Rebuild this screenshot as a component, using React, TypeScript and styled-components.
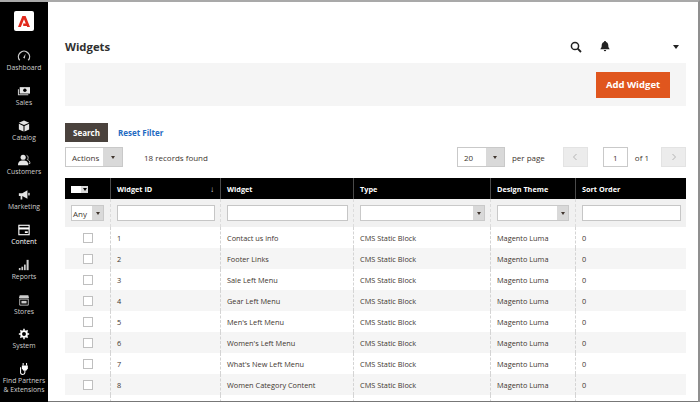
import React from "react";
import styled, { createGlobalStyle } from "styled-components";

const Global = createGlobalStyle`
  html, body { margin: 0; padding: 0; height: 402px; overflow: hidden; background: #fff; }
  body { font-family: "Open Sans", "Liberation Sans", sans-serif; color: #41362f; }
  * { box-sizing: border-box; }
`;

const Page = styled.div`
  position: relative;
  display: flex;
  width: 700px;
  height: 402px;
  overflow: hidden;
  background: #fff;
  &::after {
    content: "";
    position: absolute;
    inset: 0;
    pointer-events: none;
    border-top: 2px solid #a9a9a9;
    border-right: 2px solid #8f8f8f;
  }
`;

const Bottom = styled.div`
  position: absolute;
  left: 48px;
  right: 0;
  bottom: 0;
  height: 1px;
  background: #777;
`;

const Side = styled.nav`
  width: 48px;
  flex: none;
  background: #000;
  display: flex;
  flex-direction: column;
  align-items: center;
  padding-top: 11px;
`;

const Logo = styled.div`
  width: 20px;
  height: 20px;
  border-radius: 2px;
  background: #fff;
  display: flex;
  align-items: center;
  justify-content: center;
  margin-bottom: 18px;
`;

const NavItem = styled.div<{ $active?: boolean }>`
  height: 34.8px;
  width: 48px;
  flex: none;
  display: flex;
  flex-direction: column;
  align-items: center;
  justify-content: flex-start;
  color: ${(p) => (p.$active ? "#fff" : "#cfcfcf")};
  font-size: 6.8px;
  line-height: 9px;
  text-align: center;
  white-space: nowrap;
  svg { display: block; margin: 1px 0 1px; }
`;

const Main = styled.main`
  flex: 1;
  min-width: 0;
  padding: 0 14px 0 17px;
`;

const TopBar = styled.header`
  height: 63px;
  display: flex;
  align-items: center;
  padding-top: 30px;
`;

const Title = styled.h1`
  margin: 0;
  flex: 1;
  font-size: 11.3px;
  font-weight: 700;
  color: #303030;
`;

const TopIcons = styled.div`
  display: flex;
  align-items: center;
  margin-right: 7px;
`;

const IconSlot = styled.span<{ $w: number }>`
  width: ${(p) => p.$w}px;
  display: flex;
  align-items: center;
`;

const ActionBar = styled.div`
  height: 43px;
  background: #f5f5f5;
  display: flex;
  align-items: center;
  justify-content: flex-end;
  padding: 0 16px 0 0;
`;

const Primary = styled.button`
  width: 74px;
  height: 26px;
  border: 0;
  padding: 0;
  background: #e0561e;
  color: #fff;
  font: 700 9.5px "Open Sans", sans-serif;
`;

const FilterRow = styled.div`
  display: flex;
  align-items: center;
  gap: 10px;
  margin-top: 17px;
  height: 19px;
`;

const SearchBtn = styled.button`
  width: 43px;
  height: 19px;
  border: 0;
  padding: 0;
  background: #4a423d;
  color: #fff;
  font: 700 8px "Open Sans", sans-serif;
`;

const LinkText = styled.a`
  color: #1f6bc2;
  font-size: 8px;
  font-weight: 700;
`;

const Toolbar = styled.div`
  display: flex;
  align-items: center;
  height: 20px;
  margin-top: 5px;
  margin-bottom: 11px;
  font-size: 8px;
  color: #41362f;
`;

const Select = styled.div<{ $w: number; $h?: number }>`
  width: ${(p) => p.$w}px;
  height: ${(p) => p.$h ?? 20}px;
  flex: none;
  display: flex;
  border: 1px solid #c9c9c9;
  background: #fff;
  font-size: 8px;
  color: #41362f;
`;

const SelectText = styled.span<{ $pad?: number }>`
  flex: 1;
  padding-left: ${(p) => p.$pad ?? 6}px;
  display: flex;
  align-items: center;
`;

const Arrow = styled.span<{ $w?: number }>`
  width: ${(p) => p.$w ?? 18}px;
  flex: none;
  background: #d9d9d9;
  display: flex;
  align-items: center;
  justify-content: center;
  &::before {
    content: "";
    border-style: solid;
    border-width: 3px 2.5px 0;
    border-color: #41362f transparent transparent;
  }
`;

const Found = styled.span`
  margin-left: 21px;
  flex: 1;
`;

const PerPage = styled.span`
  margin: 0 18px 0 7px;
`;

const Pager = styled.button`
  width: 25px;
  height: 20px;
  padding: 0;
  flex: none;
  border: 1px solid #e3e3e3;
  background: #ececec;
  color: #adadad;
  display: flex;
  align-items: center;
  justify-content: center;
`;

const PageInput = styled.div`
  width: 25px;
  height: 20px;
  margin-left: 15px;
  border: 1px solid #c9c9c9;
  display: flex;
  align-items: center;
  justify-content: center;
`;

const OfText = styled.span`
  margin: 0 12px 0 7px;
`;

const Table = styled.table`
  border-collapse: separate;
  border-spacing: 0;
  table-layout: fixed;
  width: 621px;
  font-size: 7.35px;
  color: #41362f;
`;

const Th = styled.th<{ $w: number }>`
  width: ${(p) => p.$w}px;
  height: 21px;
  background: #000;
  color: #fff;
  font-size: 7.3px;
  font-weight: 700;
  text-align: left;
  padding: 0 6px;
  border-left: 1px solid #4a4a4a;
  position: relative;
  &:first-child { border-left: 0; }
`;

const HeaderBox = styled.span`
  display: inline-flex;
  width: 17px;
  height: 7px;
  background: #fff;
  justify-content: flex-end;
  vertical-align: middle;
`;

const HeaderArrow = styled.span`
  width: 7px;
  background: #d9d9d9;
  display: flex;
  align-items: center;
  justify-content: center;
  &::before {
    content: "";
    border-style: solid;
    border-width: 3px 2px 0;
    border-color: #000 transparent transparent;
  }
`;

const SortMark = styled.span`
  position: absolute;
  right: 6px;
  top: 5px;
  font-size: 8px;
  font-weight: 400;
  color: #ddd;
`;

const FilterCell = styled.td`
  height: 28px;
  background: #f1f1f1;
  padding: 0 5px 0 6px;
  border-left: 1px dashed #dcdcdc;
  &:first-child { border-left: 0; }
`;

const TextInput = styled.div`
  width: 100%;
  height: 16px;
  background: #fff;
  border: 1px solid #c6c6c6;
`;

const Row = styled.tr<{ $alt: boolean }>`
  background: ${(p) => (p.$alt ? "#f5f5f5" : "#fff")};
`;

const Td = styled.td`
  height: 21px;
  padding: 0 6px;
  border-left: 1px dashed #d4d4d4;
  white-space: nowrap;
  overflow: hidden;
  &:first-child { border-left: 0; }
`;

const Check = styled.div`
  width: 10px;
  height: 10px;
  border: 1px solid #bfbfbf;
  background: #fff;
  margin: 0 auto;
`;

const Ic = ({ children }: { children: React.ReactNode }) => (
  <svg width={14} height={12} viewBox="0 0 16 14" fill="#fff">{children}</svg>
);

const icons: Record<string, React.ReactNode> = {
  Dashboard: (
    <Ic>
      <path d="M3 12a6.500 6.500 0 1 1 10 0" fill="none" stroke="#ccc" strokeWidth="1.600" />
      <path d="M7 9 9.800 4.500 9 10z" fill="#ccc" />
    </Ic>
  ),
  Sales: (
    <Ic>
      <rect x="3" y="2.500" width="12" height="7.500" fill="#e4e4e4" />
      <circle cx="9" cy="6.200" r="2" fill="#000" />
      <path d="M1.500 5v6.500h11.500" fill="none" stroke="#ccc" strokeWidth="1.200" />
    </Ic>
  ),
  Catalog: (
    <Ic>
      <path d="M8 .5 14 3.100 8 5.700 2 3.100z M2 4.500 7.400 6.900V13.500L2 11z M14 4.500 8.600 6.900V13.500L14 11z" fill="#e4e4e4" />
    </Ic>
  ),
  Customers: (
    <Ic>
      <circle cx="7" cy="3.800" r="3" fill="#e4e4e4" />
      <path d="M1 13c0-4 2-5.500 6-5.500s6 1.500 6 5.500z" fill="#e4e4e4" />
      <path d="M11 1.500c2 .3 2.600 3.600.8 5 2 .6 3.200 2.200 3.200 4.500h-1.500" fill="none" stroke="#ccc" strokeWidth="1" />
    </Ic>
  ),
  Marketing: (
    <Ic>
      <path d="M2 5h4l6-3.500v10L6 8.200v4H4V8.200H2z" fill="#e4e4e4" />
      <rect x="13" y="4.500" width="1.600" height="3" fill="#e4e4e4" />
    </Ic>
  ),
  Content: (
    <Ic>
      <rect x="2" y="1.500" width="12" height="11" fill="none" stroke="#fff" strokeWidth="1.300" />
      <rect x="2" y="4" width="12" height="2.400" fill="#fff" />
      <rect x="9" y="8.500" width="3.400" height="2" fill="#fff" />
    </Ic>
  ),
  Reports: (
    <Ic>
      <rect x="2" y="10.500" width="2" height="2.500" fill="#ccc" />
      <rect x="5" y="9" width="2" height="4" fill="#ccc" />
      <rect x="8" y="6.500" width="2" height="6.500" fill="#ccc" />
      <rect x="11" y="1" width="2.400" height="12" fill="#ccc" />
    </Ic>
  ),
  Stores: (
    <Ic>
      <path d="M3 1.500h10l1 3.500H2z" fill="#ccc" />
      <path d="M3 6h10v7H3z" fill="none" stroke="#ccc" strokeWidth="1" />
      <rect x="5" y="8" width="6" height="3" fill="#ccc" />
    </Ic>
  ),
  System: (
    <Ic>
      <circle cx="8" cy="7" r="3.400" fill="none" stroke="#fff" strokeWidth="2.200" />
      <path d="M8 1v2.200M8 10.800V13M2 7h2.200M11.800 7H14M3.800 2.800l1.500 1.500M10.700 9.700l1.500 1.500M12.200 2.800l-1.500 1.500M5.300 9.700l-1.500 1.500" stroke="#fff" strokeWidth="1.800" />
    </Ic>
  ),
  "Find Partners": (
    <Ic>
      <path d="M7 0v3M11 0v3" stroke="#fff" strokeWidth="1.200" />
      <path d="M5.500 3h7v3.500L10.500 9h-3L5.500 6.500z" fill="#fff" />
      <path d="M9 9v2.500c0 2.500-5 2.500-5 0V5" fill="none" stroke="#fff" strokeWidth="1.200" />
    </Ic>
  ),
};

const nav = ["Dashboard", "Sales", "Catalog", "Customers", "Marketing", "Content", "Reports", "Stores", "System"];

const rows = [
  "Contact us info",
  "Footer Links",
  "Sale Left Menu",
  "Gear Left Menu",
  "Men's Left Menu",
  "Women's Left Menu",
  "What's New Left Menu",
  "Women Category Content",
];

const cols: [string, number][] = [
  ["", 45],
  ["Widget ID", 110],
  ["Widget", 133],
  ["Type", 137],
  ["Design Theme", 85],
  ["Sort Order", 111],
];

export default function App() {
  return (
    <Page>
      <Global />
      <Side>
        <Logo>
          <svg width="12" height="11" viewBox="0 0 12 11">
            <path d="M4.400 0H7.600L12 11H9.200L6 3.200 2.800 11H0z M5.200 7.500h3l1 2.400H5.200z" fill="#e1291c" />
          </svg>
        </Logo>
        {nav.map((n) => (
          <NavItem key={n} $active={n === "Content"}>
            {icons[n]}
            {n}
          </NavItem>
        ))}
        <NavItem>
          {icons["Find Partners"]}
          Find Partners
          <br />
          &amp; Extensions
        </NavItem>
      </Side>
      <Main>
        <TopBar>
          <Title>Widgets</Title>
          <TopIcons>
            <IconSlot $w={30}>
              <svg width="12" height="12" viewBox="0 0 12 12">
                <circle cx="5" cy="5" r="3.600" fill="none" stroke="#222" strokeWidth="1.500" />
                <path d="M7.700 7.700 11 11" stroke="#222" strokeWidth="1.800" />
              </svg>
            </IconSlot>
            <IconSlot $w={73}>
              <svg width="10" height="11" viewBox="0 0 10 11">
                <path d="M5 0c.7 0 1 .4 1 1 1.800.5 2.300 2 2.300 3.600 0 1.800.5 2.600 1.400 3.600H.3C1.200 7.200 1.700 6.400 1.700 4.600 1.700 3 2.200 1.500 4 1c0-.6.300-1 1-1z" fill="#222" />
                <path d="M3.800 9h2.400a1.200 1.200 0 0 1-2.400 0z" fill="#222" />
              </svg>
            </IconSlot>
            <svg width="6" height="4" viewBox="0 0 6 4">
              <path d="M0 0h6L3 4z" fill="#222" />
            </svg>
          </TopIcons>
        </TopBar>
        <ActionBar>
          <Primary>Add Widget</Primary>
        </ActionBar>
        <FilterRow>
          <SearchBtn>Search</SearchBtn>
          <LinkText>Reset Filter</LinkText>
        </FilterRow>
        <Toolbar>
          <Select $w={58}>
            <SelectText>Actions</SelectText>
            <Arrow $w={19} />
          </Select>
          <Found>18 records found</Found>
          <Select $w={48}>
            <SelectText>20</SelectText>
            <Arrow />
          </Select>
          <PerPage>per page</PerPage>
          <Pager>
            <svg width="6" height="8" viewBox="0 0 6 8"><path d="M4.500 1 1.500 4l3 3" fill="none" stroke="#b5b5b5" /></svg>
          </Pager>
          <PageInput>1</PageInput>
          <OfText>of 1</OfText>
          <Pager>
            <svg width="6" height="8" viewBox="0 0 6 8"><path d="M1.500 1l3 3-3 3" fill="none" stroke="#b5b5b5" /></svg>
          </Pager>
        </Toolbar>
        <Table>
          <thead>
            <tr>
              {cols.map(([c, w], i) => (
                <Th key={i} $w={w}>
                  {i === 0 ? (
                    <HeaderBox>
                      <HeaderArrow />
                    </HeaderBox>
                  ) : (
                    c
                  )}
                  {i === 1 && <SortMark>↓</SortMark>}
                </Th>
              ))}
            </tr>
          </thead>
          <tbody>
            <tr>
              <FilterCell>
                <Select $w={33} $h={16}>
                  <SelectText $pad={1}>Any</SelectText>
                  <Arrow $w={11} />
                </Select>
              </FilterCell>
              <FilterCell><TextInput /></FilterCell>
              <FilterCell><TextInput /></FilterCell>
              <FilterCell>
                <Select $w={125} $h={16}>
                  <SelectText />
                  <Arrow $w={11} />
                </Select>
              </FilterCell>
              <FilterCell>
                <Select $w={72} $h={16}>
                  <SelectText />
                  <Arrow $w={11} />
                </Select>
              </FilterCell>
              <FilterCell><TextInput /></FilterCell>
            </tr>
            {rows.map((r, i) => (
              <Row key={r} $alt={i % 2 === 1}>
                <Td><Check /></Td>
                <Td>{i + 1}</Td>
                <Td>{r}</Td>
                <Td>CMS Static Block</Td>
                <Td>Magento Luma</Td>
                <Td>0</Td>
              </Row>
            ))}
            <Row $alt={false}>
              <Td><Check /></Td>
              <Td />
              <Td />
              <Td />
              <Td />
              <Td />
            </Row>
          </tbody>
        </Table>
        <Bottom />
      </Main>
    </Page>
  );
}
